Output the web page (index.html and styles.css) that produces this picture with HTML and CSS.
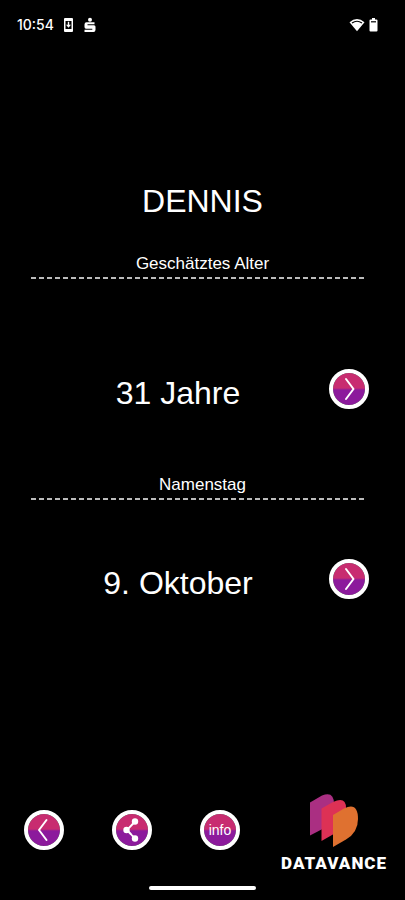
FILE: index.html
```html
<!DOCTYPE html>
<html lang="de">
<head>
<meta charset="utf-8">
<meta name="viewport" content="width=device-width, initial-scale=1">
<title>Dennis</title>
<link rel="stylesheet" href="styles.css">
</head>
<body>
<header class="status">
  <span class="clock">10:54</span>
  <svg class="status-icon" width="12" height="16" viewBox="0 0 12 16" aria-hidden="true">
    <path fill="#fff" fill-rule="evenodd" d="M2 1h7q1 0 1 1v12q0 1-1 1H2q-1 0-1-1V2q0-1 1-1zM2.500 4v8h6V4z"/>
    <path fill="#fff" d="M4.800 4.800h1.400v3h1.800L5.500 10.800 3 7.800h1.800z"/>
  </svg>
  <svg class="status-icon" width="12" height="16" viewBox="0 0 12 16" aria-hidden="true">
    <circle cx="6" cy="2.800" r="2" fill="#fff"/>
    <path fill="#fff" d="M2.500 5.300H10.500V7.300H3.500v1H10q1.500 0 1.500 1.500v3Q11.500 15 9.500 15H.500v-2.300h7.800v-1H2Q.500 11.700.500 10V7.500q0-2.200 2-2.200z"/>
  </svg>
  <svg class="wifi" width="16" height="14" viewBox="0 0 16 14" aria-hidden="true">
    <path fill="#fff" d="M.500 4.200Q8-2.400 15.500 4.200L8 13.300z"/>
    <path d="M3 5.100Q8 1.400 13 5.100" fill="none" stroke="#000" stroke-width="1.200"/>
  </svg>
  <svg width="9" height="14" viewBox="0 0 9 14" aria-hidden="true">
    <path fill="#fff" d="M3 0h3v1.500h1.500q1 0 1 1v10q0 1-1 1h-6q-1 0-1-1v-10q0-1 1-1H3z"/>
    <path d="M2 3.800h5" stroke="#000" stroke-width="1.200"/>
  </svg>
</header>
<main>
  <h1>DENNIS</h1>
  <section>
    <h2>Geschätztes Alter</h2>
    <div class="row age">
      <p>31 Jahre</p>
      <button class="round" aria-label="Alter anzeigen"><svg viewBox="0 0 32 32"><path d="M13 6 20.500 16 13 26"/></svg></button>
    </div>
  </section>
  <section>
    <h2>Namenstag</h2>
    <div class="row day">
      <p>9. Oktober</p>
      <button class="round" aria-label="Namenstag anzeigen"><svg viewBox="0 0 32 32"><path d="M13 6 20.500 16 13 26"/></svg></button>
    </div>
  </section>
</main>
<footer>
  <nav>
    <button class="round" aria-label="Zurück"><svg viewBox="0 0 32 32"><path d="M18.500 6 11 16 18.500 26"/></svg></button>
    <button class="round" aria-label="Teilen"><svg viewBox="0 0 32 32"><path stroke-dasharray="8 1.500" d="M19 7.500 11 16 19 24.500"/><circle cx="19" cy="7.500" r="3.200"/><circle cx="10.500" cy="16" r="3.200"/><circle cx="19" cy="24.500" r="3.200"/></svg></button>
    <button class="round">info</button>
  </nav>
  <div class="brand">
    <svg width="50" height="55" viewBox="0 0 50 55" aria-hidden="true">
      <path fill="#aa2f82" d="M1 9.500 13 2.500Q25-2.500 25 11V30L1 42.500z"/>
      <path fill="#dd3155" d="M12.500 15.500 24 9Q37 3 37 15V34L12.500 48z"/>
      <path fill="#df7130" d="M24 22 35 15.500Q49 8.500 49 26 49 39.500 37 46.500L24 54z"/>
    </svg>
    <span>DATAVANCE</span>
  </div>
</footer>
<div class="home"></div>
</body>
</html>
```
FILE: styles.css
```css
* {
  box-sizing: border-box;
}

body {
  margin: 0;
  min-height: 100vh;
  display: flex;
  flex-direction: column;
  background: #000;
  color: #fff;
  font-family: "Liberation Sans", Arial, sans-serif;
}

h1,
h2,
p {
  margin: 0;
  font-weight: 400;
  text-align: center;
}

.status {
  height: 50px;
  padding: 0 27px 0 17px;
  display: flex;
  align-items: center;
}

.clock {
  font: 500 14px/20px "Inter", sans-serif;
}

.status-icon {
  margin-left: 9px;
}

.wifi {
  margin: 0 4px 0 auto;
}

main {
  flex: 1;
}

h1 {
  margin: 131px 0 33px;
  font-size: 32px;
  line-height: 40px;
}

h2 {
  margin: 0 31px;
  font-size: 17px;
  line-height: 20px;
}

h2::after {
  content: "";
  display: block;
  height: 2px;
  margin: 3px 7px 0 0;
  background: repeating-linear-gradient(90deg, #bbb 0 5px, #000 5px 8px);
}

.row {
  display: grid;
  grid-template-columns: 1fr 40px;
  align-items: start;
  padding: 0 36px 0 27px;
}

.row p {
  padding-top: 4px;
  font-size: 32px;
  line-height: 40px;
}

.age {
  margin: 90px 0 62px;
}

.day {
  margin-top: 59px;
}

.round {
  width: 40px;
  height: 40px;
  padding: 0;
  border: 4px solid #fff;
  border-radius: 50%;
  background: linear-gradient(#c82c70 47%, #8c1a9c 53%) padding-box;
  color: #fff;
  font: 14px/28px "Liberation Sans", Arial, sans-serif;
}

.round svg {
  display: block;
  width: 32px;
  height: 32px;
  fill: none;
  stroke: #fff;
  stroke-width: 2;
  stroke-linecap: round;
  stroke-linejoin: round;
}

.round circle {
  fill: #fff;
  stroke: none;
}

footer {
  display: flex;
  align-items: flex-start;
  justify-content: space-between;
  padding: 0 18px 0 24px;
}

nav {
  display: flex;
  gap: 48px;
  padding-top: 17px;
}

.brand {
  display: flex;
  flex-direction: column;
  align-items: center;
  gap: 3px;
}

.brand span {
  font: 900 17px/24px "Roboto", sans-serif;
  letter-spacing: 1px;
}

.home {
  width: 107px;
  height: 4px;
  margin: 11px auto 10px;
  border-radius: 2px;
  background: #fff;
}
```
